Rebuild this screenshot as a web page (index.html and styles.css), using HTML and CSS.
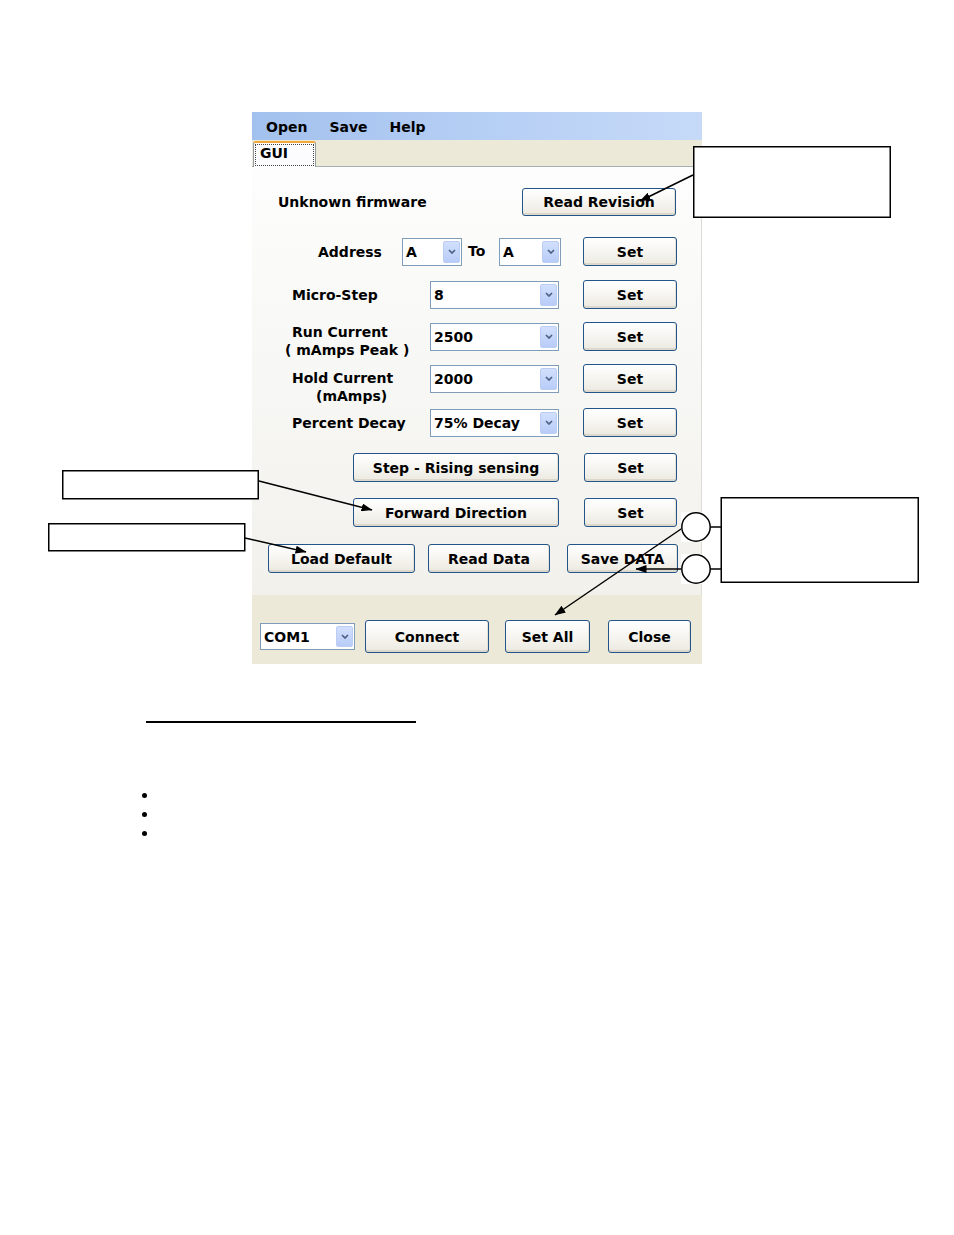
FILE: index.html
```html
<!DOCTYPE html>
<html>
<head>
<meta charset="utf-8">
<title>GUI</title>
<link rel="stylesheet" href="styles.css">
</head>
<body>
<div class="page">
  <div class="window">
    <div class="menubar">
      <span class="menu-item">Open</span>
      <span class="menu-item">Save</span>
      <span class="menu-item">Help</span>
    </div>
    <div class="tabstrip">
      <div class="tab"><span class="tab-label">GUI</span></div>
    </div>
    <div class="tabpage">
      <div class="row row-firmware">
        <span class="label">Unknown firmware</span>
        <button class="btn btn-revision">Read Revision</button>
      </div>

      <div class="row row-field row-address">
        <span class="label">Address</span>
        <div class="addr-group">
          <div class="combo combo-addr1"><span class="combo-value">A</span><span class="combo-arrow"><svg width="8" height="5" viewBox="0 0 8 5"><path d="M1 1 L4 4 L7 1" fill="none" stroke="#4d6185" stroke-width="1.7"/></svg></span></div>
          <span class="to">To</span>
          <div class="combo combo-addr2"><span class="combo-value">A</span><span class="combo-arrow"><svg width="8" height="5" viewBox="0 0 8 5"><path d="M1 1 L4 4 L7 1" fill="none" stroke="#4d6185" stroke-width="1.7"/></svg></span></div>
        </div>
        <button class="btn btn-set btn-set-addr">Set</button>
      </div>

      <div class="row row-field row-micro">
        <span class="label">Micro-Step</span>
        <div class="combo combo-main"><span class="combo-value">8</span><span class="combo-arrow"><svg width="8" height="5" viewBox="0 0 8 5"><path d="M1 1 L4 4 L7 1" fill="none" stroke="#4d6185" stroke-width="1.7"/></svg></span></div>
        <button class="btn btn-set">Set</button>
      </div>

      <div class="row row-field row-run">
        <span class="label label-2line label-run"><span class="line">Run Current</span><span class="line line-run2">( mAmps Peak )</span></span>
        <div class="combo combo-main"><span class="combo-value">2500</span><span class="combo-arrow"><svg width="8" height="5" viewBox="0 0 8 5"><path d="M1 1 L4 4 L7 1" fill="none" stroke="#4d6185" stroke-width="1.7"/></svg></span></div>
        <button class="btn btn-set">Set</button>
      </div>

      <div class="row row-field row-hold">
        <span class="label label-2line label-hold"><span class="line">Hold Current</span><span class="line line-hold2">(mAmps)</span></span>
        <div class="combo combo-main"><span class="combo-value">2000</span><span class="combo-arrow"><svg width="8" height="5" viewBox="0 0 8 5"><path d="M1 1 L4 4 L7 1" fill="none" stroke="#4d6185" stroke-width="1.7"/></svg></span></div>
        <button class="btn btn-set">Set</button>
      </div>

      <div class="row row-field row-decay">
        <span class="label">Percent Decay</span>
        <div class="combo combo-main"><span class="combo-value">75% Decay</span><span class="combo-arrow"><svg width="8" height="5" viewBox="0 0 8 5"><path d="M1 1 L4 4 L7 1" fill="none" stroke="#4d6185" stroke-width="1.7"/></svg></span></div>
        <button class="btn btn-set">Set</button>
      </div>

      <div class="row row-toggle row-step">
        <button class="btn btn-wide">Step - Rising sensing</button>
        <button class="btn btn-set btn-set-toggle">Set</button>
      </div>

      <div class="row row-toggle row-dir">
        <button class="btn btn-wide">Forward Direction</button>
        <button class="btn btn-set btn-set-toggle">Set</button>
      </div>

      <div class="row row-actions">
        <button class="btn btn-load">Load Default</button>
        <button class="btn btn-read">Read Data</button>
        <button class="btn btn-save">Save DATA</button>
      </div>
    </div>
    <div class="bottombar">
      <div class="combo combo-com"><span class="combo-value">COM1</span><span class="combo-arrow"><svg width="8" height="5" viewBox="0 0 8 5"><path d="M1 1 L4 4 L7 1" fill="none" stroke="#4d6185" stroke-width="1.7"/></svg></span></div>
      <button class="btn btn-big btn-connect">Connect</button>
      <button class="btn btn-big btn-setall">Set All</button>
      <button class="btn btn-big btn-close">Close</button>
    </div>
  </div>

  <div class="doc">
    <div class="doc-rule"></div>
    <ul class="bullets">
      <li></li>
      <li></li>
      <li></li>
    </ul>
  </div>

  <svg class="annotations" width="954" height="1235" viewBox="0 0 954 1235">
    <defs>
      <marker id="ah" markerUnits="userSpaceOnUse" markerWidth="11" markerHeight="8" refX="10.5" refY="4" orient="auto">
        <path d="M0 0 L11 4 L0 8 Z" fill="#000"/>
      </marker>
    </defs>
    <g stroke="#000" stroke-width="1.5" fill="none">
      <line x1="693" y1="175" x2="640" y2="201" marker-end="url(#ah)"/>
      <line x1="259" y1="481" x2="372" y2="510" marker-end="url(#ah)"/>
      <line x1="245" y1="538" x2="306" y2="552" marker-end="url(#ah)"/>
      <line x1="684" y1="527" x2="555" y2="615" marker-end="url(#ah)"/>
      <line x1="683" y1="569" x2="636" y2="569" marker-end="url(#ah)"/>
      <line x1="710" y1="527" x2="721" y2="527"/>
      <line x1="710" y1="569" x2="721" y2="569"/>
    </g>
    <rect x="681" y="512" width="21" height="30" fill="#fff"/>
    <rect x="681" y="554" width="21" height="30" fill="#fff"/>
    <g stroke="#000" stroke-width="1.5" fill="#fff">
      <rect x="693.75" y="146.75" width="196.5" height="70.5"/>
      <rect x="62.75" y="470.75" width="195.5" height="28"/>
      <rect x="48.75" y="523.75" width="196" height="27"/>
      <rect x="721.25" y="497.75" width="197" height="84.5"/>
      <circle cx="696" cy="527" r="14.2"/>
      <circle cx="696" cy="569" r="14.2"/>
    </g>
  </svg>
</div>
</body>
</html>
```

FILE: styles.css
```css
* {
  box-sizing: border-box;
}

html,
body {
  margin: 0;
  padding: 0;
  background: #ffffff;
}

body {
  font-family: "DejaVu Sans", "Liberation Sans", sans-serif;
  font-weight: bold;
  font-size: 14px;
  color: #000000;
}

.page {
  position: relative;
  width: 954px;
  height: 1235px;
  padding-top: 112px;
  overflow: hidden;
}

/* ---------- window ---------- */
.window {
  margin-left: 252px;
  width: 450px;
  height: 552px;
  display: flex;
  flex-direction: column;
}

.menubar {
  flex: none;
  height: 28px;
  display: flex;
  align-items: center;
  gap: 22px;
  padding: 2px 0 0 14px;
  background: linear-gradient(to right, #a3c1ee, #bcd3f6 70%, #c6daf8);
}

.tabstrip {
  flex: none;
  height: 27px;
  background: #ece9d8;
  border-bottom: 1px solid #a7aeb0;
  display: flex;
  align-items: flex-end;
  padding-left: 1px;
}

.tab {
  width: 63px;
  height: 26px;
  margin-bottom: -1px;
  background: #fcfcfe;
  border: 1px solid #919b9c;
  border-bottom: 0;
  border-top: 2px solid #f3a83a;
  border-radius: 3px 3px 0 0;
  padding: 1px 1px 0 1px;
}

.tab-label {
  display: block;
  height: 22px;
  border: 1px dotted #444444;
  padding-left: 4px;
  line-height: 16px;
}

.tabpage {
  flex: none;
  height: 428px;
  background: linear-gradient(#fdfdfd, #f8f8f6 40%, #f2f1ec);
  border-right: 1px solid #dcdbd4;
}

.bottombar {
  flex: none;
  height: 69px;
  background: #ece9d8;
  display: flex;
  align-items: center;
  padding: 14px 11px 0 8px;
}

/* ---------- controls ---------- */
.btn {
  height: 29px;
  padding: 0;
  margin: 0;
  border: 1px solid #23548a;
  border-radius: 3px;
  background: linear-gradient(#ffffff, #f7f6f2 45%, #ebe9e0);
  box-shadow: inset 0 -2px 0 #dcd8cb, inset -1px 0 0 #e4e1d6;
  display: flex;
  align-items: center;
  justify-content: center;
  font: inherit;
  color: #000000;
  white-space: nowrap;
}

.combo {
  height: 28px;
  border: 1px solid #7f9db9;
  background: #ffffff;
  display: flex;
  align-items: stretch;
  padding: 1px;
}

.combo-value {
  flex: 1;
  display: flex;
  align-items: center;
  padding-left: 2px;
  white-space: nowrap;
  overflow: hidden;
}

.combo-arrow {
  flex: none;
  width: 17px;
  margin: 1px 0;
  border: 1px solid #bccdf5;
  border-radius: 2px;
  background: linear-gradient(#d2e0fd, #b8ccf7);
  display: flex;
  align-items: center;
  justify-content: center;
}

/* ---------- rows ---------- */
.row {
  display: flex;
  align-items: center;
  height: 29px;
}

.label {
  white-space: nowrap;
}

.row-firmware {
  margin-top: 21px;
  height: 28px;
  padding: 0 25px 0 26px;
  justify-content: space-between;
}

.btn-revision {
  width: 154px;
  height: 28px;
}

.row-field {
  padding-right: 24px;
}

.row-field .label {
  padding-left: 40px;
}

.row-address .label {
  padding-left: 66px;
}

.addr-group {
  margin-left: auto;
  display: flex;
  align-items: center;
}

.combo-addr1 {
  width: 60px;
}

.combo-addr2 {
  width: 62px;
}

.to {
  width: 37px;
  padding-left: 6px;
  margin-top: -2px;
}

.combo-main {
  margin-left: auto;
  width: 129px;
}

.btn-set {
  width: 94px;
  margin-left: 24px;
}

.btn-set-addr {
  margin-left: 22px;
}

.label-2line {
  align-self: flex-start;
  line-height: 18px;
}

.label-2line .line {
  display: block;
}

.label-run {
  margin-top: 1px;
}

.line-run2 {
  margin-left: -7px;
}

.label-hold {
  margin-top: 5px;
}

.line-hold2 {
  margin-left: 24px;
}

.row-address { margin-top: 21px; }
.row-micro { margin-top: 14px; }
.row-run { margin-top: 13px; }
.row-hold { margin-top: 13px; }
.row-decay { margin-top: 15px; }
.row-step { margin-top: 16px; }
.row-dir { margin-top: 16px; }
.row-actions { margin-top: 17px; }

.row-toggle {
  padding-left: 101px;
}

.btn-wide {
  width: 206px;
}

.btn-set-toggle {
  width: 93px;
  margin-left: 25px;
}

.row-actions {
  padding-left: 16px;
}

.btn-load { width: 147px; }
.btn-read { width: 122px; margin-left: 13px; }
.btn-save { width: 111px; margin-left: 17px; }

.combo-com {
  width: 95px;
  height: 27px;
}

.btn-big {
  height: 33px;
}

.btn-connect { width: 124px; margin-left: 10px; }
.btn-setall { width: 85px; margin-left: 16px; }
.btn-close { width: 83px; margin-left: 18px; }

/* ---------- document text below ---------- */
.doc {
  padding-left: 146px;
}

.doc-rule {
  width: 270px;
  height: 2px;
  margin-top: 57px;
  background: #000000;
}

.bullets {
  list-style: none;
  margin: 63px 0 0 0;
  padding: 0;
}

.bullets li {
  height: 19px;
  display: flex;
  align-items: center;
}

.bullets li::before {
  content: "";
  width: 5px;
  height: 5px;
  margin-left: -4px;
  border-radius: 50%;
  background: #000000;
}

/* ---------- callout overlay ---------- */
.annotations {
  position: absolute;
  left: 0;
  top: 0;
  pointer-events: none;
}
```
